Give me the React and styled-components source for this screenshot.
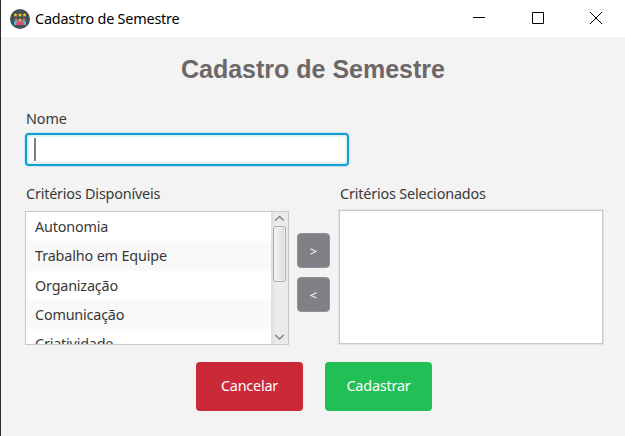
import React from "react";
import styled, { createGlobalStyle } from "styled-components";

const GlobalStyle = createGlobalStyle`
  * { box-sizing: border-box; }
  html, body { margin: 0; padding: 0; overflow: hidden; }
  button { font: inherit; border: 0; padding: 0; }
`;

const Window = styled.div`
  width: 625px;
  height: 436px;
  display: flex;
  flex-direction: column;
  background: #f3f3f3;
  border-left: 1px solid #2b2b2b;
  overflow: hidden;
  font-family: "Noto Sans", "Open Sans", sans-serif;
  font-size: 14.4px;
  line-height: 20px;
  color: #383838;
`;

const TitleBar = styled.header`
  height: 37px;
  flex: none;
  display: flex;
  align-items: center;
  background: #fff;
  padding-left: 9px;
  color: #000;
`;

const Text = styled.span`
  white-space: pre;
  letter-spacing: ${(p) => p.$track || 0}px;
`;

const WindowTitle = styled(Text)`
  margin-left: 5px;
  flex: 1;
`;

const Controls = styled.div`
  display: flex;
  width: 175px;
  height: 36px;
  align-self: flex-start;
`;

const Control = styled.button`
  width: 58.5px;
  flex: none;
  background: transparent;
  display: flex;
  align-items: center;
  justify-content: center;
  svg { display: block; }
`;

const Content = styled.main`
  flex: 1;
  padding: 15px 0 0 24px;
`;

const Heading = styled.h1`
  margin: 0 0 23px;
  width: 576px;
  height: 34px;
  line-height: 34px;
  text-align: center;
  font-family: "Liberation Sans", Arial, sans-serif;
  font-size: 25px;
  font-weight: 700;
  color: #6d6767;
`;

const Label = styled.label`
  display: block;
  height: 20px;
  padding-left: 1px;
  white-space: pre;
  letter-spacing: ${(p) => p.$track || 0}px;
`;

const Input = styled.div`
  margin-top: 4px;
  width: 324px;
  height: 33px;
  border: 2px solid #129fd6;
  border-radius: 4px;
  background: #fff;
  box-shadow: 0 0 0 1px #c5e6f3, inset 0 0 0 2px #dff1f9;
  padding: 3px 0 0 7px;
`;

const Caret = styled.div`
  width: 2px;
  height: 23px;
  background: #808080;
`;

const Lists = styled.section`
  display: flex;
  margin-top: 18px;
  height: 162px;
`;

const Column = styled.div`
  width: 264px;
`;

const ListBox = styled.div`
  display: flex;
  margin-top: ${(p) => p.$gap}px;
  height: 134px;
  background: #fff;
  border: 1px solid #c8c8c8;
  box-shadow: ${(p) => (p.$soft ? "0 0 0 1px #e2e2e2" : "none")};
  overflow: hidden;
`;

const Items = styled.ul`
  margin: 0;
  padding: 0;
  list-style: none;
  flex: 1;
`;

const Item = styled.li`
  height: 29.3px;
  line-height: 29px;
  padding-left: 9px;
  white-space: pre;
  letter-spacing: ${(p) => p.$track}px;
  &:nth-child(even) { background: #f9f9f9; }
`;

const ScrollBar = styled.div`
  width: 17px;
  flex: none;
  display: flex;
  flex-direction: column;
  align-items: center;
  background: linear-gradient(90deg, #dedede, #ececec 30%, #e9e9e9);
  svg { flex: none; display: block; }
`;

const Thumb = styled.div`
  width: 13px;
  height: 56px;
  border: 1px solid #ababab;
  border-radius: 3px;
  background: linear-gradient(90deg, #f4f4f4, #dcdcdc);
  box-shadow: inset 0 0 0 1px #f3f3f3;
`;

const Track = styled.div`
  flex: 1;
`;

const MoveButtons = styled.div`
  width: 50px;
  display: flex;
  flex-direction: column;
  align-items: flex-start;
  gap: 9px;
  padding: 49px 0 0 8px;
`;

const MoveButton = styled.button`
  width: 33px;
  height: 35px;
  border-radius: 4px;
  border: 1px solid #919197;
  background: #808187;
  color: #fff;
  font-size: 13px;
  line-height: 32px;
`;

const Actions = styled.footer`
  display: flex;
  gap: 22px;
  margin-top: 16px;
  padding-left: 171px;
`;

const ActionButton = styled.button`
  width: 107px;
  height: 49px;
  border-radius: 4px;
  background: ${(p) => p.$color};
  color: #fff;
  line-height: 47px;
  padding-bottom: 2px;
  letter-spacing: ${(p) => p.$track}px;
`;

function AppIcon() {
  return (
    <svg width="20" height="20" viewBox="0 0 20 20">
      <circle cx="10" cy="10" r="10" fill="#465059" />
      <g fill="#fecb16">
        {[5.5, 10, 14.5].map((x) => (
          <path key={x} transform={`translate(${x} 5.9)`} d="M0-2 .6-.7 2-.5 1 .5 1.2 1.9 0 1.2-1.2 1.9-1 .5-2-.5-.6-.7Z" />
        ))}
      </g>
      <path d="M4 16v-3q0-1.5 1.7-1.5H8V16zM16 16v-3q0-1.5-1.7-1.5H12V16z" fill="#41c4df" />
      <circle cx="6" cy="10.7" r="1.3" fill="#c98250" />
      <circle cx="14" cy="10.7" r="1.3" fill="#c98250" />
      <path d="M6.2 16v-1.6q0-1.9 2-1.9h3.6q2 0 2 1.9V16z" fill="#f04862" />
      <circle cx="10" cy="11.2" r="1.6" fill="#f2a174" />
    </svg>
  );
}

const criteria = [
  ["Autonomia", -0.2],
  ["Trabalho em Equipe", -0.15],
  ["Organização", -0.2],
  ["Comunicação", -0.2],
  ["Criatividade", -0.2],
];

function Chevron({ up }) {
  return (
    <svg width="17" height="14" viewBox="0 0 17 14" fill="none" stroke="#858585" strokeWidth="1.6">
      <path d={up ? "M4.2 8.5 8.5 4.5 12.8 8.5" : "M4.2 5 8.5 9 12.8 5"} />
    </svg>
  );
}

export default function App() {
  return (
    <Window>
      <GlobalStyle />
      <TitleBar>
        <AppIcon />
        <WindowTitle $track={-0.2}>Cadastro de Semestre</WindowTitle>
        <Controls>
          <Control aria-label="Minimizar">
            <svg width="12" height="12"><path d="M0 5.5H12" stroke="#000" /></svg>
          </Control>
          <Control aria-label="Maximizar">
            <svg width="12" height="12"><path d="M.5.5h11v11H.5z" fill="none" stroke="#000" /></svg>
          </Control>
          <Control aria-label="Fechar">
            <svg width="12" height="12"><path d="M0 0 12 12M12 0 0 12" stroke="#000" /></svg>
          </Control>
        </Controls>
      </TitleBar>
      <Content>
        <Heading>Cadastro de Semestre</Heading>
        <Label $track={-0.1}>Nome</Label>
        <Input><Caret /></Input>
        <Lists>
          <Column>
            <Label $track={-0.2}>Critérios Disponíveis</Label>
            <ListBox $gap={7}>
              <Items>
                {criteria.map(([name, track]) => (
                  <Item key={name} $track={track}>{name}</Item>
                ))}
              </Items>
              <ScrollBar>
                <Chevron up />
                <Thumb />
                <Track />
                <Chevron />
              </ScrollBar>
            </ListBox>
          </Column>
          <MoveButtons>
            <MoveButton>&gt;</MoveButton>
            <MoveButton>&lt;</MoveButton>
          </MoveButtons>
          <Column>
            <Label $track={-0.18}>Critérios Selecionados</Label>
            <ListBox $gap={6} $soft />
          </Column>
        </Lists>
        <Actions>
          <ActionButton $color="#ca2937" $track={-0.2}>Cancelar</ActionButton>
          <ActionButton $color="#21bf55" $track={-0.2}>Cadastrar</ActionButton>
        </Actions>
      </Content>
    </Window>
  );
}
